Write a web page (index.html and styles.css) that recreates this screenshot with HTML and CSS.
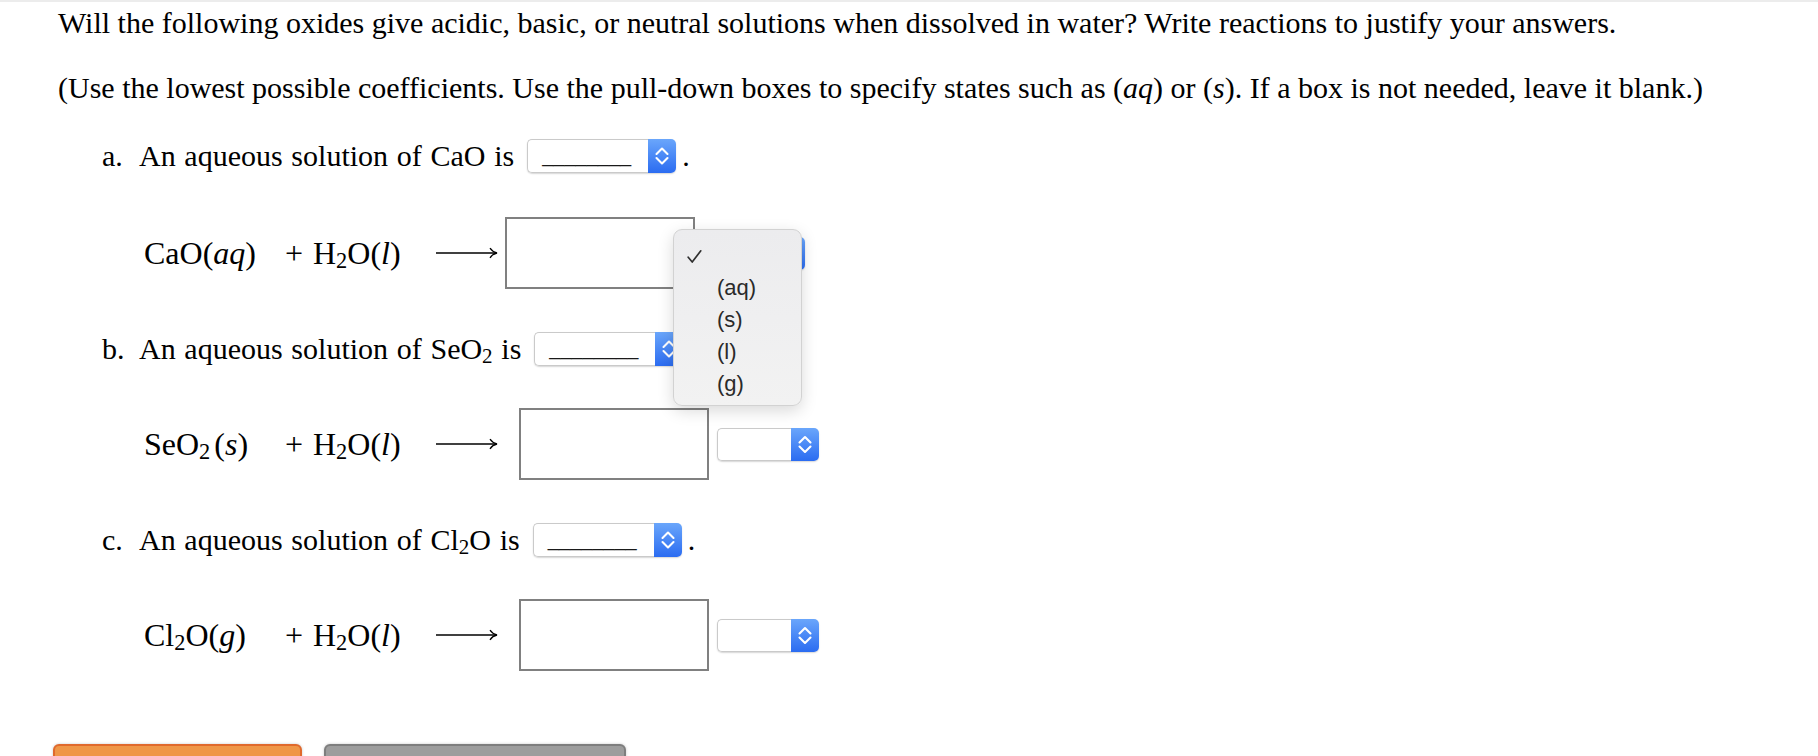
FILE: index.html
```html
<!DOCTYPE html>
<html lang="en">
<head>
<meta charset="utf-8">
<title>Oxides in water</title>
<link rel="stylesheet" href="styles.css">
</head>
<body>
<div class="screen">
  <div class="content">
    <p class="q q1">Will the following oxides give acidic, basic, or neutral solutions when dissolved in water? Write reactions to justify your answers.</p>
    <p class="q q2">(Use the lowest possible coefficients. Use the pull-down boxes to specify states such as (<i>aq</i>) or (<i>s</i>). If a box is not needed, leave it blank.)</p>

    <div class="item item-a">
      <span class="lbl">a.</span><span class="txt">An aqueous solution of CaO is</span>
      <span class="sel sel-lg"><span class="sel-val">________</span><span class="sel-btn"><svg viewBox="0 0 28 34" width="28" height="34"><polyline points="8.5,15 14,9.5 19.5,15"/><polyline points="8.5,19 14,24.5 19.5,19"/></svg></span></span><span class="dot">.</span>
    </div>

    <div class="eq eq-a">
      <div class="math">
        <span class="t1">CaO(<i>aq</i>)</span><span class="plus">+</span><span class="t2">H<sub>2</sub>O(<i>l</i>)</span>
        <svg class="arrow" viewBox="0 0 62 14" width="62" height="14"><line x1="0" y1="7" x2="60" y2="7"/><path d="M54 2.2 Q56.5 6 61 7 Q56.5 8 54 11.8"/></svg>
      </div>
      <div class="box box-a"></div>
      <span class="sel sel-sm"><span class="sel-val"></span><span class="sel-btn"><svg viewBox="0 0 28 33" width="28" height="33"><polyline points="8.5,14.5 14,9 19.5,14.5"/><polyline points="8.5,18.5 14,24 19.5,18.5"/></svg></span></span>
    </div>

    <div class="item item-b">
      <span class="lbl">b.</span><span class="txt">An aqueous solution of SeO<sub>2</sub> is</span>
      <span class="sel sel-lg"><span class="sel-val">________</span><span class="sel-btn"><svg viewBox="0 0 28 34" width="28" height="34"><polyline points="8.5,15 14,9.5 19.5,15"/><polyline points="8.5,19 14,24.5 19.5,19"/></svg></span></span><span class="dot">.</span>
    </div>

    <div class="eq eq-b">
      <div class="math">
        <span class="t1">SeO<sub class="gap">2</sub>(<i>s</i>)</span><span class="plus">+</span><span class="t2">H<sub>2</sub>O(<i>l</i>)</span>
        <svg class="arrow" viewBox="0 0 62 14" width="62" height="14"><line x1="0" y1="7" x2="60" y2="7"/><path d="M54 2.2 Q56.5 6 61 7 Q56.5 8 54 11.8"/></svg>
      </div>
      <div class="box box-b"></div>
      <span class="sel sel-sm"><span class="sel-val"></span><span class="sel-btn"><svg viewBox="0 0 28 33" width="28" height="33"><polyline points="8.5,14.5 14,9 19.5,14.5"/><polyline points="8.5,18.5 14,24 19.5,18.5"/></svg></span></span>
    </div>

    <div class="item item-c">
      <span class="lbl">c.</span><span class="txt">An aqueous solution of Cl<sub>2</sub>O is</span>
      <span class="sel sel-lg"><span class="sel-val">________</span><span class="sel-btn"><svg viewBox="0 0 28 34" width="28" height="34"><polyline points="8.5,15 14,9.5 19.5,15"/><polyline points="8.5,19 14,24.5 19.5,19"/></svg></span></span><span class="dot">.</span>
    </div>

    <div class="eq eq-c">
      <div class="math">
        <span class="t1">Cl<sub>2</sub>O(<i>g</i>)</span><span class="plus">+</span><span class="t2">H<sub>2</sub>O(<i>l</i>)</span>
        <svg class="arrow" viewBox="0 0 62 14" width="62" height="14"><line x1="0" y1="7" x2="60" y2="7"/><path d="M54 2.2 Q56.5 6 61 7 Q56.5 8 54 11.8"/></svg>
      </div>
      <div class="box box-b"></div>
      <span class="sel sel-sm"><span class="sel-val"></span><span class="sel-btn"><svg viewBox="0 0 28 33" width="28" height="33"><polyline points="8.5,14.5 14,9 19.5,14.5"/><polyline points="8.5,18.5 14,24 19.5,18.5"/></svg></span></span>
    </div>

    <div class="buttons">
      <div class="btn btn-orange"></div>
      <div class="btn btn-gray"></div>
    </div>
  </div>

  <div class="menu">
    <div class="menu-row menu-check"><svg viewBox="0 0 15 15" width="15" height="15"><polyline points="1.2,8.2 5.2,13 13.8,1.8"/></svg></div>
    <div class="menu-row">(aq)</div>
    <div class="menu-row">(s)</div>
    <div class="menu-row">(l)</div>
    <div class="menu-row">(g)</div>
  </div>
</div>
</body>
</html>
```

FILE: styles.css
```css
html, body {
  margin: 0;
  padding: 0;
  background: #ffffff;
}

body {
  font-family: "Liberation Serif", "Times New Roman", serif;
  color: #000;
}

.screen {
  position: relative;
  height: 756px;
  overflow: hidden;
  border-top: 2px solid #ececec;
  box-sizing: border-box;
}

.content {
  display: flex;
  flex-direction: column;
  padding-left: 58px;
}

.q {
  margin: 0;
  font-size: 30px;
  line-height: 34px;
  white-space: nowrap;
}

.q1 { margin-top: 4px; }
.q2 { margin-top: 31px; }

.item {
  display: flex;
  align-items: center;
  height: 34px;
  padding-left: 44px;
  font-size: 30px;
  line-height: 34px;
  white-space: nowrap;
  word-spacing: 1.2px;
}

.item-a { margin-top: 34px; }
.item-b { margin-top: 43px; }
.item-c { margin-top: 43px; }

.lbl { width: 37px; }

sub {
  font-size: 0.7em;
  line-height: 0;
  vertical-align: -0.2em;
}

sub.gap { margin-right: 4px; }

.dot { margin-left: 6px; }

/* select controls */
.sel {
  display: flex;
  box-sizing: border-box;
  border-radius: 5px;
  box-shadow: 0 1px 1.5px rgba(0, 0, 0, 0.16);
}

.sel-lg {
  width: 149px;
  height: 34px;
  margin-left: 13px;
}

.sel-sm {
  width: 102px;
  height: 33px;
  margin-left: 8px;
}

.sel-val {
  flex: 1;
  box-sizing: border-box;
  background: #fff;
  border: 1px solid #cacaca;
  border-right: 0;
  border-radius: 5px 0 0 5px;
  font-family: "Liberation Sans", Arial, sans-serif;
  font-size: 20px;
  line-height: 30px;
  color: #1a1a1a;
  padding-left: 14px;
  word-spacing: 0;
}

.sel-btn {
  width: 28px;
  border-radius: 0 5px 5px 0;
  background: linear-gradient(#6aa6fb, #2b6cf1);
  display: flex;
  align-items: center;
  justify-content: center;
}

.sel-btn svg polyline {
  fill: none;
  stroke: #ffffff;
  stroke-width: 2.1;
  stroke-linecap: round;
  stroke-linejoin: round;
}

/* equations */
.eq {
  display: flex;
  align-items: center;
  padding-left: 86px;
  font-size: 32px;
  line-height: 34px;
  white-space: nowrap;
}

.eq-a { margin-top: 44px; }
.eq-b { margin-top: 42px; }
.eq-c { margin-top: 42px; }

.math {
  display: flex;
  align-items: center;
  width: 354px;
}

.t1 { width: 141px; }
.plus { width: 28px; }
.t2 { width: 123px; }

.arrow line,
.arrow path {
  fill: none;
  stroke: #000;
  stroke-width: 1.3;
}

.box {
  box-sizing: border-box;
  width: 190px;
  height: 72px;
  border: 2px solid #808080;
  background: #fff;
}

.box-a { margin-left: 7px; }
.box-b { margin-left: 21px; }

/* buttons */
.buttons {
  display: flex;
  gap: 22px;
  margin-top: 73px;
  margin-left: -5px;
}

.btn {
  box-sizing: border-box;
  height: 44px;
  border-radius: 6px;
  box-shadow: 0 0 3px rgba(0, 0, 0, 0.22);
}

.btn-orange {
  width: 249px;
  background: #ef9647;
  border: 2px solid #e0692c;
}

.btn-gray {
  width: 302px;
  background: #9d9d9d;
  border: 2px solid #7e7e7e;
}

/* open pull-down menu */
.menu {
  position: absolute;
  left: 673px;
  top: 227px;
  width: 129px;
  height: 177px;
  box-sizing: border-box;
  padding-top: 10px;
  border: 1px solid #d2d2d2;
  border-radius: 9px;
  background: linear-gradient(#ececee, #f2f2f2);
  box-shadow: 0 5px 16px rgba(0, 0, 0, 0.15);
  z-index: 5;
}

.menu-row {
  height: 32px;
  display: flex;
  align-items: center;
  padding-left: 43px;
  font-family: "Liberation Sans", Arial, sans-serif;
  font-size: 22px;
  color: #2a2a2a;
}

.menu-check {
  padding-left: 13px;
}

.menu-check polyline {
  fill: none;
  stroke: #2f2f2f;
  stroke-width: 1.7;
  stroke-linecap: round;
  stroke-linejoin: round;
}
```
